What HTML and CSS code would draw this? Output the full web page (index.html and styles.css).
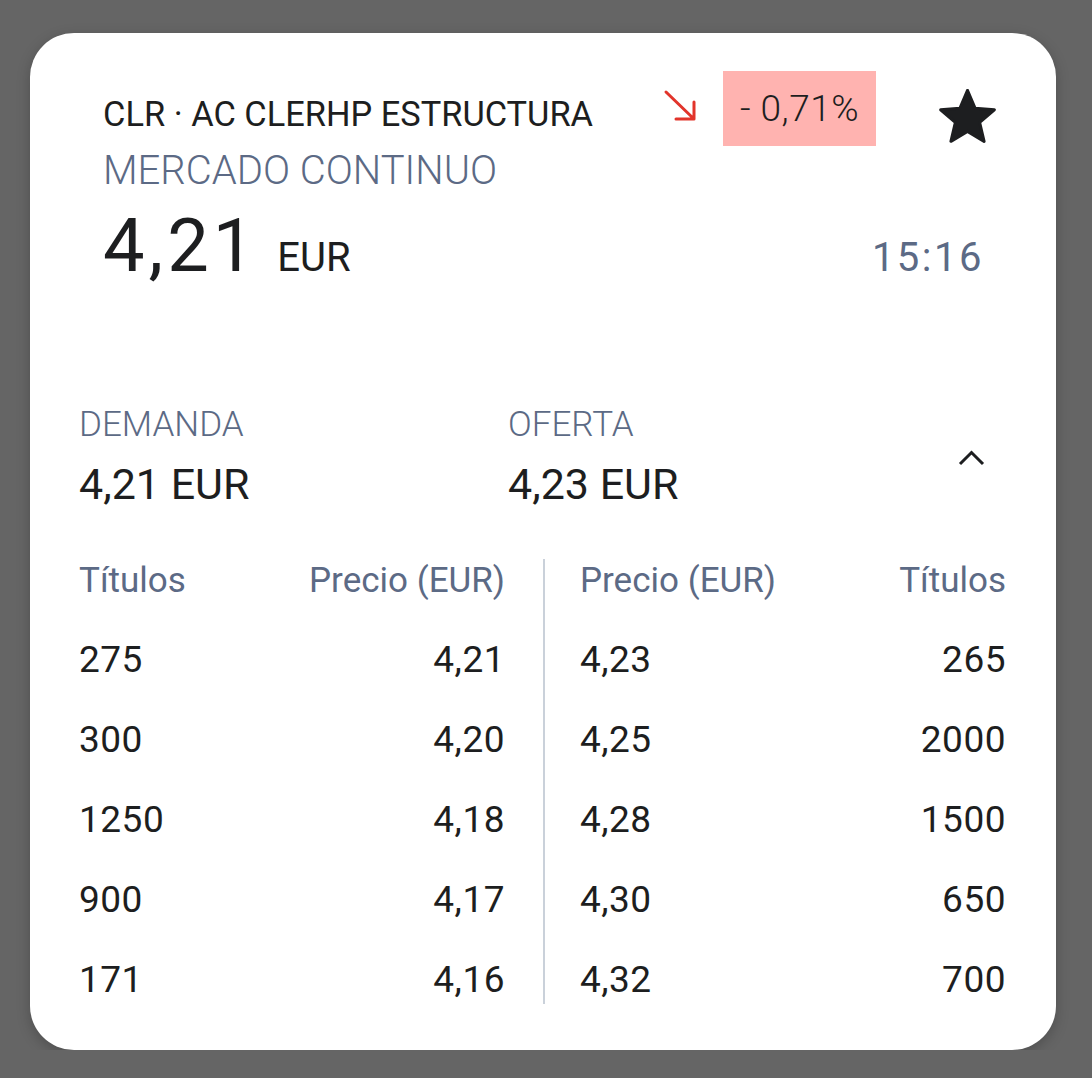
FILE: index.html
```html
<!DOCTYPE html>
<html lang="es">
<head>
  <meta charset="UTF-8" />
  <meta name="viewport" content="width=device-width,initial-scale=1.0" />
  <title>CLR · Profundidad de mercado</title>
  <link rel="stylesheet" href="styles.css">
</head>
<body>
  <main class="card">
    <header class="quote">
      <div class="quote-top">
        <h1 class="quote-name">CLR · AC CLERHP ESTRUCTURA</h1>
        <svg class="trend" width="34" height="36" viewBox="0 0 34 36" aria-hidden="true">
          <path d="M3 4 L31 31 M13 31 H31 V14" fill="none" stroke="#e2342b" stroke-width="3" stroke-linecap="round" stroke-linejoin="round"/>
        </svg>
        <span class="change">- 0,71%</span>
        <button class="fav" aria-label="Favorito">
          <svg width="57" height="54" viewBox="1.4 1.5 21.2 20.1" aria-hidden="true">
            <path d="M12 17.27L18.18 21l-1.64-7.03L22 9.24l-7.19-.61L12 2 9.19 8.63 2 9.24l5.46 4.73L5.82 21z" fill="#1d1e20" stroke="#1d1e20" stroke-width="1.1" stroke-linejoin="round"/>
          </svg>
        </button>
      </div>
      <p class="market">MERCADO CONTINUO</p>
      <div class="price-row">
        <span class="price">4,21</span>
        <span class="currency">EUR</span>
        <span class="time">15:16</span>
      </div>
    </header>

    <section class="spread">
      <div class="spread-item">
        <span class="label">DEMANDA</span>
        <span class="value">4,21 EUR</span>
      </div>
      <div class="spread-item">
        <span class="label">OFERTA</span>
        <span class="value">4,23 EUR</span>
      </div>
      <button class="toggle" aria-label="Ocultar">
        <svg width="27" height="16" viewBox="0 0 27 16" aria-hidden="true">
          <path d="M2 14 L13.5 2.5 L25 14" fill="none" stroke="#1d1e20" stroke-width="3"/>
        </svg>
      </button>
    </section>

    <section class="book">
      <div class="book-side bids">
        <div class="book-head"><span>Títulos</span><span>Precio (EUR)</span></div>
        <div class="book-row"><span>275</span><span>4,21</span></div>
        <div class="book-row"><span>300</span><span>4,20</span></div>
        <div class="book-row"><span>1250</span><span>4,18</span></div>
        <div class="book-row"><span>900</span><span>4,17</span></div>
        <div class="book-row"><span>171</span><span>4,16</span></div>
      </div>
      <div class="book-side asks">
        <div class="book-head"><span>Precio (EUR)</span><span>Títulos</span></div>
        <div class="book-row"><span>4,23</span><span>265</span></div>
        <div class="book-row"><span>4,25</span><span>2000</span></div>
        <div class="book-row"><span>4,28</span><span>1500</span></div>
        <div class="book-row"><span>4,30</span><span>650</span></div>
        <div class="book-row"><span>4,32</span><span>700</span></div>
      </div>
    </section>
  </main>
</body>
</html>
```
FILE: styles.css
```css
:root {
  --color-page: #656565;
  --color-surface: #ffffff;
  --color-text: #1d1e20;
  --color-muted: #5c6a85;
  --color-line: #cad1da;
  --color-down: #ffb3b0;
}

* {
  box-sizing: border-box;
}

body {
  margin: 0;
  background: var(--color-page);
  font-family: Roboto, "Noto Sans", sans-serif;
  color: var(--color-text);
}

button {
  background: none;
  border: 0;
  padding: 0;
  cursor: pointer;
  display: flex;
}

.card {
  width: 1026px;
  height: 1017px;
  margin: 33px 0 0 30px;
  padding: 38px 50px 0 49px;
  background: var(--color-surface);
  border-radius: 44px;
  box-shadow: 0 4px 14px rgba(0, 0, 0, 0.22);
}

/* quote header */
.quote {
  padding: 0 10px 0 24px;
}

.quote-top {
  display: flex;
  align-items: center;
  height: 75px;
}

.quote-name {
  margin: 0;
  padding-top: 12px;
  font-size: 34.4px;
  font-weight: 400;
  line-height: 1;
  white-space: nowrap;
}

.trend {
  margin-left: auto;
  margin-top: -6px;
}

.change {
  display: flex;
  align-items: center;
  justify-content: center;
  width: 153px;
  height: 75px;
  margin-left: 26px;
  background: var(--color-down);
  font-size: 37px;
  font-weight: 300;
  letter-spacing: 0.5px;
}

.fav {
  margin-left: 63px;
  margin-top: 15px;
}

.market {
  margin: 1px 0 0;
  font-size: 40px;
  font-weight: 300;
  line-height: 48px;
  color: var(--color-muted);
}

.price-row {
  display: flex;
  align-items: baseline;
  margin-top: 14px;
}

.price {
  font-size: 74px;
  line-height: 73px;
  letter-spacing: 4px;
}

.currency {
  margin-left: 19px;
  font-size: 40px;
}

.time {
  margin-left: auto;
  margin-right: 12px;
  font-size: 40px;
  font-weight: 400;
  letter-spacing: 2.5px;
  color: var(--color-muted);
}

/* best bid / ask */
.spread {
  display: grid;
  grid-template-columns: 429px 1fr auto;
  align-items: center;
  margin-top: 122px;
}

.spread-item {
  display: flex;
  flex-direction: column;
}

.label {
  font-size: 35px;
  font-weight: 300;
  line-height: 42px;
  color: var(--color-muted);
}

.value {
  margin-top: 13px;
  font-size: 43px;
  line-height: 50px;
}

.toggle {
  margin-right: 21px;
  margin-top: 2px;
}

/* order book */
.book {
  display: grid;
  grid-template-columns: 466px 1fr;
  margin-top: 50px;
}

.book-side {
  display: flex;
  flex-direction: column;
  gap: 32px;
}

.bids {
  padding-right: 38px;
  border-right: 2px solid var(--color-line);
}

.asks {
  padding-left: 35px;
}

.book-head,
.book-row {
  display: flex;
  justify-content: space-between;
}

.book-head {
  margin-bottom: 1px;
  font-size: 35px;
  line-height: 44px;
  color: var(--color-muted);
}

.book-row {
  font-size: 37px;
  line-height: 48px;
  letter-spacing: 0.5px;
}
```
